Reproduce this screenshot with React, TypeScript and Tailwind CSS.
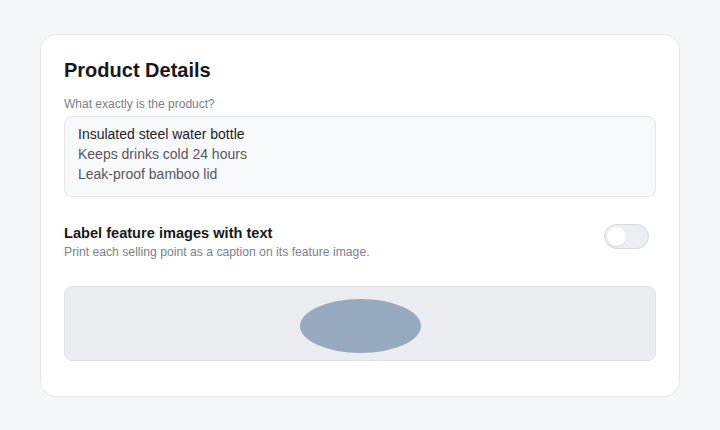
export default function App() {
	return (
		<div className="min-h-[430px] w-[720px] bg-[#f5f6f8] px-10 pt-[34px] font-['Liberation_Sans',Arial,sans-serif]">
			<div className="rounded-2xl border border-[#e4e6ea] bg-white px-[23px] pt-[21px] pb-[35px]">
				<h1 className="text-[20px] font-bold leading-[28px] text-[#17181a]">
					Product Details
				</h1>

				{/* Product description */}
				<label className="mt-[12px] block text-[12px] leading-[16px] text-[#7a7d83]">
					What exactly is the product?
				</label>
				<div className="mt-[4px] h-[81px] rounded-lg border border-[#e3e6eb] bg-[#f8f9fb] px-[13px] pt-[7px] text-[14px] leading-[20px]">
					<p className="text-[#1c1d20]">Insulated steel water bottle</p>
					<p className="text-[#55585e]">Keeps drinks cold 24 hours</p>
					<p className="text-[#55585e]">Leak-proof bamboo lid</p>
				</div>

				{/* Caption toggle */}
				<div className="mt-[26px] flex items-start justify-between">
					<div>
						<h2 className="text-[14.6px] font-bold leading-[20px] text-[#17181a]">
							Label feature images with text
						</h2>
						<p className="text-[12.2px] leading-[18px] text-[#7e8187]">
							Print each selling point as a caption on its feature image.
						</p>
					</div>
					<button
						type="button"
						className="mr-[7px] mt-[1px] flex h-[25px] w-[45px] items-center rounded-full border border-[#d6d8dc] bg-[#eceef1] px-[2px]"
					>
						<span className="h-[19px] w-[19px] rounded-full bg-white shadow-[0_1px_2px_rgba(0,0,0,0.08)]" />
					</button>
				</div>

				{/* Preview */}
				<div className="mt-[25px] flex h-[75px] items-center justify-center rounded-lg border border-[#dfe2e6] bg-[#eaecf0]">
					<div className="mt-[4px] h-[54px] w-[121px] rounded-[50%] bg-[#97a9be]" />
				</div>
			</div>
		</div>
	);
}
